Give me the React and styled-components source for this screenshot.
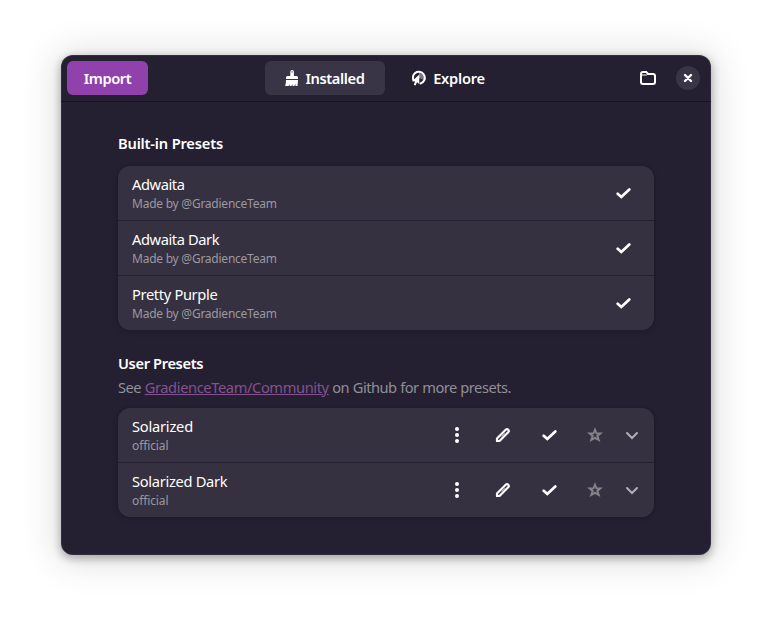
import React from "react";
import styled, { createGlobalStyle } from "styled-components";

const GlobalStyle = createGlobalStyle`
  * { box-sizing: border-box; }
  html, body { margin: 0; background: #fff; }
  body { font-family: "Noto Sans", sans-serif; font-size: 14.67px; color: #fff; }
  button { font: inherit; color: inherit; border: 0; padding: 0; background: none; }
`;

const Desktop = styled.div`
  width: 772px;
  height: 622px;
  padding: 55px 61px 67px;
  overflow: hidden;
`;

const Window = styled.main`
  height: 500px;
  border-radius: 12px;
  background: #241f31;
  box-shadow: 0 3px 9px 1px rgba(0, 0, 0, 0.28), 0 2px 36px 6px rgba(0, 0, 0, 0.12),
    inset 0 0 0 1px rgba(255, 255, 255, 0.07);
`;

const HeaderBar = styled.header`
  display: grid;
  grid-template-columns: 198px 243px 1fr;
  align-items: center;
  height: 47px;
  padding: 0 11px 1px 6px;
  border-bottom: 1px solid #17131f;
`;

const ImportButton = styled.button`
  width: 81px;
  height: 34px;
  border-radius: 6px;
  background: #9141ac;
  font-weight: 600;
`;

const Tabs = styled.nav`
  display: flex;
  gap: 3px;
`;

const Tab = styled.button`
  display: flex;
  align-items: center;
  justify-content: center;
  gap: 6px;
  width: 120px;
  height: 34px;
  padding-right: ${(p) => (p.$active ? 2 : 0)}px;
  border-radius: 6px;
  background: ${(p) => (p.$active ? "#3a3546" : "transparent")};
  font-weight: 600;
`;

const WindowActions = styled.div`
  display: flex;
  justify-content: flex-end;
  align-items: center;
  gap: 20px;
`;

const IconButton = styled.button`
  display: grid;
  place-items: center;
  width: 16px;
  height: 16px;
`;

const CloseButton = styled(IconButton)`
  width: 24px;
  height: 24px;
  border-radius: 50%;
  background: #3a3546;
`;

const Page = styled.div`
  padding: 30px 57px 0;
`;

const Label = styled.span`
  display: inline-block;
  white-space: nowrap;
  letter-spacing: ${(p) => p.$spacing || 0}px;
`;

const GroupTitle = styled.h2`
  margin: ${(p) => p.$top || 0}px 0 0;
  font-size: 14.67px;
  font-weight: 600;
  line-height: 22px;
`;

const Description = styled.p`
  margin: 2px 0 0;
  line-height: 22px;
  white-space: nowrap;
  letter-spacing: -0.49px;
  word-spacing: 0.2px;
  color: #918f98;
`;

const Link = styled.a`
  color: #845290;
  letter-spacing: -0.39px;
  text-decoration: underline;
  text-underline-offset: 1px;
  text-decoration-thickness: 1px;
`;

const Card = styled.section`
  margin-top: ${(p) => p.$top}px;
  border-radius: 12px;
  background: #363140;
  box-shadow: 0 0 0 1px rgba(0, 0, 0, 0.03), 0 1px 3px 1px rgba(0, 0, 0, 0.07),
    0 2px 6px 2px rgba(0, 0, 0, 0.03);
`;

const Row = styled.div`
  display: flex;
  align-items: center;
  justify-content: space-between;
  height: 54px;
  padding: 0 14px;
  & + & { height: 55px; border-top: 1px solid #241f31; }
`;

const RowText = styled.div`
  display: flex;
  flex-direction: column;
  align-items: flex-start;
`;

const RowTitle = styled(Label)`
  padding-bottom: 1px;
  line-height: 18px;
`;

const RowSubtitle = styled(Label)`
  padding-top: 1px;
  margin-bottom: -1px;
  font-size: 12px;
  line-height: 18px;
  color: #9b98a0;
`;

const RowActions = styled.div`
  display: flex;
  align-items: center;
  gap: 30px;
  margin-right: ${(p) => p.$inset || 0}px;
`;

const ApplyButton = styled(IconButton)`
  width: 17px;
  margin-right: -1px;
  justify-items: end;
`;

const Expander = styled(IconButton)`
  margin-left: -9px;
`;

const Icon = styled.svg.attrs({ width: 16, height: 16, viewBox: "0 0 16 16", "aria-hidden": true })`
  display: block;
  flex: none;
  fill: ${(p) => p.$color || "#fff"};
`;

const CheckIcon = () => (
  <Icon $color="none"><path d="M1.700 8.700 5.300 12 13.300 4.400" stroke="#fff" strokeWidth="2.700" strokeLinejoin="miter" strokeLinecap="round" /></Icon>
);

const MoreIcon = () => (
  <Icon><circle cx="8" cy="2" r="2" /><circle cx="8" cy="8" r="2" /><circle cx="8" cy="14" r="2" /></Icon>
);

const EditIcon = () => (
  <Icon $color="none">
    <path d="M2 14v-2.500L10.700 2.800a1.750 1.750 0 0 1 2.500 2.500L4.500 14Z" stroke="#fff" strokeWidth="2.2" strokeLinejoin="round" />
    <path d="M1 11 5 15H1Z" fill="#fff" />
    <path d="m6.600 9.400 3.200-3.200" stroke="#fff" strokeWidth=".6" />
  </Icon>
);

const StarIcon = () => (
  <Icon>
    <path fillRule="evenodd" d="M8 0 10.100 5.400H16L11.500 9.300 13.400 15 8 11.900 2.600 15 4.500 9.300 0 5.400H5.900ZM8 5 7.200 7.300H5.100L6.800 8.600 6.100 10.900 8 9.600 9.900 10.900 9.200 8.600 10.900 7.300H8.800Z" fill="#85828b" />
  </Icon>
);

const ChevronIcon = () => (
  <Icon $color="none"><path d="m3 6 5 5 5-5" stroke="#b1afb6" strokeWidth="2" strokeLinecap="round" /></Icon>
);

const FolderIcon = () => (
  <Icon $color="none">
    <path d="M1 12V4q0-2 2-2h3.2l2 2H13q2 0 2 2v6q0 2-2 2H3q-2 0-2-2Z" stroke="#fff" strokeWidth="2" />
    <path d="M2 5h4.5L8 4" stroke="#fff" strokeWidth="1" />
  </Icon>
);

const CloseIcon = () => (
  <Icon $color="none"><path d="m5 5 6 6m0-6-6 6" stroke="#fff" strokeWidth="2.4" strokeLinecap="round" /></Icon>
);

const BrushIcon = () => (
  <Icon>
    <path fillRule="evenodd" d="M6.3 6V1.8a1.8 1.8 0 0 1 3.6 0V6h2.6q1.5 0 1.5 1.5V9H2V7.500q0-1.500 1.500-1.500ZM8.100 1.200a.7.7 0 1 0 0 1.400.7.7 0 0 0 0-1.400Z" />
    <path d="M2 10h12l-.5 6h-1.900l-.3-2-.9 2H8.600l-.2-2-.9 2H5.600l.1-2-1.200 2H1.200Q2 13 2 10Z" />
  </Icon>
);

const ExploreIcon = () => (
  <Icon>
    <path d="M8 3v5l5 2A5 5 0 0 0 8 3Z" opacity=".4" />
    <path d="M2.200 9.800A6 6 0 1 1 9.500 13.500" fill="none" stroke="#fff" strokeWidth="2" strokeLinecap="round" />
    <path d="M8.300 4.500V14L6 12.200 4.500 15.500 2.800 14.700 4.100 11.500 1 11.200Z" />
  </Icon>
);

const builtIn = [
  { name: "Adwaita", spacing: -0.42 },
  { name: "Adwaita Dark", spacing: -0.41 },
  { name: "Pretty Purple", spacing: -0.34 },
];

const userPresets = [
  { name: "Solarized", spacing: -0.22 },
  { name: "Solarized Dark", spacing: -0.31 },
];

export default function App() {
  return (
    <>
      <GlobalStyle />
      <Desktop>
        <Window>
          <HeaderBar>
            <ImportButton><Label $spacing={-0.45}>Import</Label></ImportButton>
            <Tabs>
              <Tab $active><BrushIcon /><Label $spacing={-0.4}>Installed</Label></Tab>
              <Tab><ExploreIcon /><Label $spacing={-0.25}>Explore</Label></Tab>
            </Tabs>
            <WindowActions>
              <IconButton aria-label="Open folder"><FolderIcon /></IconButton>
              <CloseButton aria-label="Close"><CloseIcon /></CloseButton>
            </WindowActions>
          </HeaderBar>
          <Page>
            <GroupTitle><Label $spacing={-0.18}>Built-in Presets</Label></GroupTitle>
            <Card $top={12}>
              {builtIn.map((preset) => (
                <Row key={preset.name}>
                  <RowText>
                    <RowTitle $spacing={preset.spacing}>{preset.name}</RowTitle>
                    <RowSubtitle $spacing={-0.24}>Made by @GradienceTeam</RowSubtitle>
                  </RowText>
                  <RowActions $inset={8}>
                    <IconButton aria-label="Apply"><CheckIcon /></IconButton>
                  </RowActions>
                </Row>
              ))}
            </Card>
            <GroupTitle $top={22}><Label $spacing={-0.37}>User Presets</Label></GroupTitle>
            <Description>
              See <Link>GradienceTeam/Community</Link> on Github for more presets.
            </Description>
            <Card $top={10}>
              {userPresets.map((preset) => (
                <Row key={preset.name}>
                  <RowText>
                    <RowTitle $spacing={preset.spacing}>{preset.name}</RowTitle>
                    <RowSubtitle $spacing={-0.1}>official</RowSubtitle>
                  </RowText>
                  <RowActions>
                    <IconButton aria-label="More"><MoreIcon /></IconButton>
                    <IconButton aria-label="Edit"><EditIcon /></IconButton>
                    <ApplyButton aria-label="Apply"><CheckIcon /></ApplyButton>
                    <IconButton aria-label="Favorite"><StarIcon /></IconButton>
                    <Expander aria-label="Expand"><ChevronIcon /></Expander>
                  </RowActions>
                </Row>
              ))}
            </Card>
          </Page>
        </Window>
      </Desktop>
    </>
  );
}
